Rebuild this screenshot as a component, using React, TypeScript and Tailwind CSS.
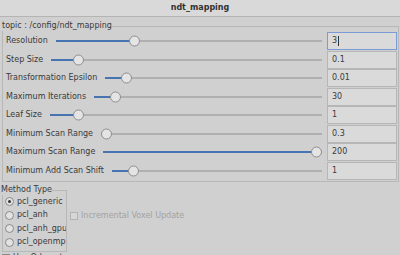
import React from "react";

const rows: { label: string; value: string; frac: number; focus?: boolean }[] = [
  { label: "Resolution", value: "3", frac: 0.288, focus: true },
  { label: "Step Size", value: "0.1", frac: 0.084 },
  { label: "Transformation Epsilon", value: "0.01", frac: 0.077 },
  { label: "Maximum Iterations", value: "30", frac: 0.073 },
  { label: "Leaf Size", value: "1", frac: 0.087 },
  { label: "Minimum Scan Range", value: "0.3", frac: 0 },
  { label: "Maximum Scan Range", value: "200", frac: 1 },
  { label: "Minimum Add Scan Shift", value: "1", frac: 0.08 },
];

function Slider({ frac }: { frac: number }) {
  return (
    <div className="relative flex-1 h-full flex items-center">
      <div className="w-full h-[2px] bg-[#b0b0b0]" />
      <div
        className="absolute left-0 top-1/2 -translate-y-1/2 h-[2px] bg-[#4774b0]"
        style={{ width: `calc((100% - 11px) * ${frac} + 5px)` }}
      />
      <div
        className="absolute top-1/2 -translate-y-1/2 w-[11px] h-[11px] rounded-full border border-[#8e8e8e] bg-[#e4e4e4]"
        style={{ left: `calc((100% - 11px) * ${frac})` }}
      />
    </div>
  );
}

function Radio({ label, checked }: { label: string; checked?: boolean }) {
  return (
    <div className="h-[13.5px] flex items-center whitespace-nowrap">
      <div className="shrink-0 w-[9px] h-[9px] rounded-full border border-[#8a8a8a] bg-[#e2e2e2] flex items-center justify-center ml-[2px]">
        {checked && <div className="w-[3px] h-[3px] rounded-full bg-[#333]" />}
      </div>
      <span className="ml-[3px]">{label}</span>
    </div>
  );
}

export default function App() {
  return (
    <div
      className="w-[400px] h-[255px] overflow-hidden bg-[#d0d0d0] text-[#3a3a3a] text-[8px] leading-[10px]"
      style={{ fontFamily: '"DejaVu Sans", sans-serif' }}
    >
      <div className="h-[17px] bg-[#d9d9d9] border-b border-[#b4b4b4] flex items-center justify-center font-bold text-[#333]">
        ndt_mapping
      </div>
      <fieldset className="mt-[4px] ml-[2px] mr-[1px] border border-[#b8b8b8] pt-[1px] pb-[1px]">
        <legend className="px-0 ml-[-1px] leading-[10px]">topic : /config/ndt_mapping</legend>
        {rows.map((r) => (
          <div key={r.label} className="h-[18.5px] flex items-center pl-[3px] pr-[1px]">
            <span className="whitespace-nowrap mr-[8px]">{r.label}</span>
            <Slider frac={r.frac} />
            <div
              className={
                "ml-[5px] w-[70px] h-[18px] border bg-[#dadada] flex items-center pl-[4px] " +
                (r.focus ? "border-[#7a9bd6]" : "border-[#b6b6b6]")
              }
            >
              <span>{r.value}</span>
              {r.focus && <span className="w-px h-[10px] bg-[#333] ml-px" />}
            </div>
          </div>
        ))}
      </fieldset>
      <div className="flex items-start mt-[3px]">
        <fieldset className="ml-[2px] w-[65px] min-w-0 shrink-0 border border-[#b8b8b8] pb-[2px] overflow-hidden">
          <legend className="px-0 ml-[-2px] leading-[10px] whitespace-nowrap">Method Type</legend>
          <Radio label="pcl_generic" checked />
          <Radio label="pcl_anh" />
          <Radio label="pcl_anh_gpu" />
          <Radio label="pcl_openmp" />
        </fieldset>
        <div className="mt-[26px] ml-[3px] flex items-center">
          <div className="w-[8px] h-[8px] border border-[#b4b4b4] bg-[#d6d6d6]" />
          <span className="ml-[3px] text-[#a2a2a2]">Incremental Voxel Update</span>
        </div>
      </div>
      <div className="flex items-center ml-[2px] mt-[1px]">
        <div className="w-[8px] h-[8px] border border-[#8a8a8a] bg-[#e2e2e2]" />
        <span className="ml-[3px]">Use Odometry</span>
      </div>
    </div>
  );
}
